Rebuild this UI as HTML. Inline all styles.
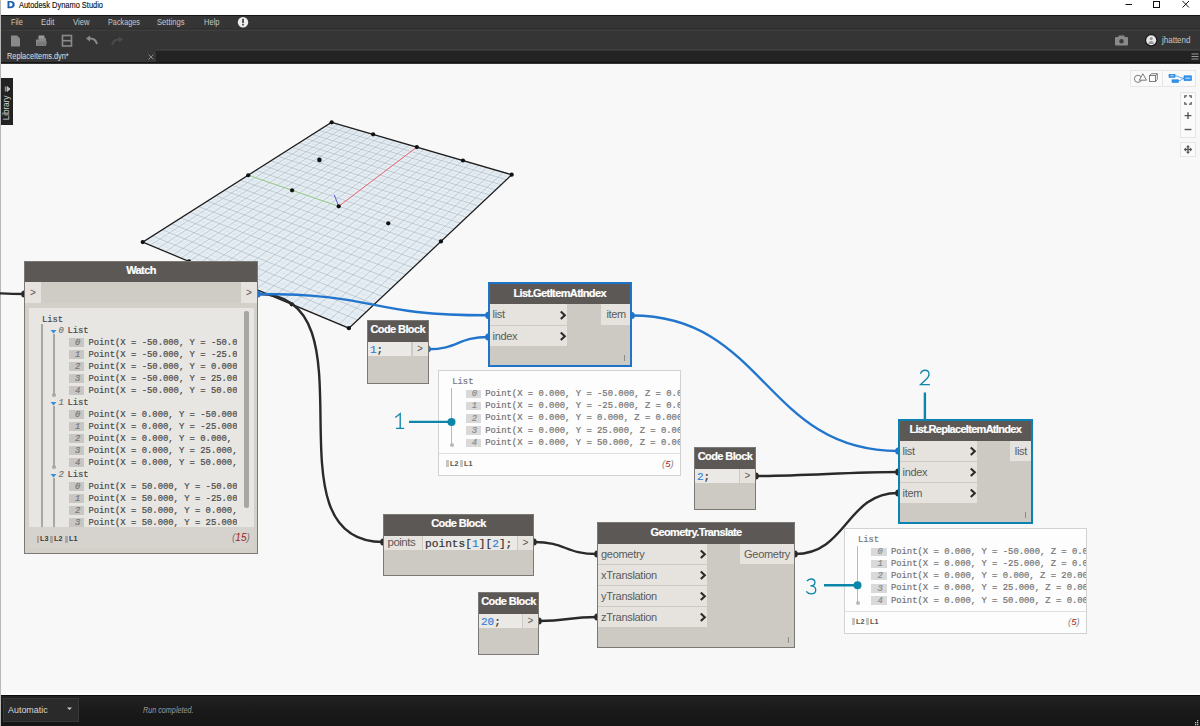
<!DOCTYPE html><html><head><meta charset='utf-8'><style>
*{box-sizing:border-box}
html,body{margin:0;padding:0;width:1200px;height:726px;overflow:hidden;background:#f8f8f8;font-family:"Liberation Sans", sans-serif}
.a{position:absolute}
.t{position:absolute;white-space:pre;line-height:1}
.node{position:absolute;background:#cdc9c3;border:1px solid #7c7874}
.hdr{position:absolute;left:0;right:0;top:0;background:#5b5855;color:#fff;font-weight:bold;font-size:11px;text-align:center;white-space:pre;-webkit-text-stroke:0.2px #fff}
.port{position:absolute;background:#e6e3de;color:#5a5a5a;font-size:11px;white-space:pre}
.mono{font-family:"Liberation Mono", monospace;-webkit-text-stroke:0.2px currentColor}
</style></head><body>
<div class='a' style='left:0;top:0;width:1200px;height:14px;background:#fff'></div>
<div class='a' style='left:0;top:0;width:1px;height:726px;background:#b8b8b8'></div>
<svg class='a' style='left:6px;top:0' width='10' height='10' viewBox='0 0 10 10'><path d='M1.5 1h3.2c2.6 0 4 1.4 4 3.6S7.3 8.2 4.7 8.2H1.5z' fill='#1b5fae'/><path d='M3.4 2.6h1.1c1.3 0 2 .8 2 2s-.7 2-2 2H3.4z' fill='#fff'/></svg>
<div class='t' style='left:18.5px;top:1px;font-size:9.2px;color:#111;-webkit-text-stroke:0.15px #111;transform:scaleX(0.81);transform-origin:0 0'>Autodesk Dynamo Studio</div>
<svg class='a' style='left:1120px;top:0' width='80' height='14'><path d='M5.5 4.5h6.5' stroke='#111' stroke-width='1'/><rect x='33.5' y='1.5' width='6' height='6' fill='none' stroke='#111' stroke-width='1'/><path d='M62.5 1l6.5 6.5M69 1l-6.5 6.5' stroke='#111' stroke-width='1'/></svg>
<div class='a' style='left:1px;top:14.5px;width:1199px;height:49px;background:#353535'></div>
<div class='a' style='left:1px;top:14.5px;width:1199px;height:1.2px;background:#151515'></div>
<div class='a' style='left:1px;top:28px;width:1199px;height:1px;background:#303030'></div>
<div class='a' style='left:1px;top:29.7px;width:1199px;height:1.2px;background:#3e3e3e'></div>
<div class='a' style='left:1px;top:62px;width:1199px;height:1.3px;background:#141414'></div>
<div class='a' style='left:156px;top:49.3px;width:1044px;height:1.2px;background:#3e3e3e'></div>
<div class='a' style='left:156px;top:50.5px;width:1044px;height:11.5px;background:#232323'></div>
<div class='t' style='left:10.5px;top:18px;font-size:9.2px;color:#c8c8c8;transform:scaleX(0.8);transform-origin:0 0'>File</div>
<div class='t' style='left:41px;top:18px;font-size:9.2px;color:#c8c8c8;transform:scaleX(0.84);transform-origin:0 0'>Edit</div>
<div class='t' style='left:73px;top:18px;font-size:9.2px;color:#c8c8c8;transform:scaleX(0.83);transform-origin:0 0'>View</div>
<div class='t' style='left:108px;top:18px;font-size:9.2px;color:#c8c8c8;transform:scaleX(0.79);transform-origin:0 0'>Packages</div>
<div class='t' style='left:157px;top:18px;font-size:9.2px;color:#c8c8c8;transform:scaleX(0.83);transform-origin:0 0'>Settings</div>
<div class='t' style='left:204px;top:18px;font-size:9.2px;color:#c8c8c8;transform:scaleX(0.82);transform-origin:0 0'>Help</div>
<svg class='a' style='left:237px;top:16px' width='13' height='13'><circle cx='6' cy='6.3' r='5.2' fill='#eee'/><rect x='5.2' y='2.8' width='1.6' height='4.4' fill='#333'/><rect x='5.2' y='8' width='1.6' height='1.5' fill='#333'/></svg>
<svg class='a' style='left:0;top:30px' width='130' height='20'>
<path d='M11 5.5h6l3 3v8h-9z' fill='#8a8a8a'/>
<path d='M38.5 5.5h6v4h-6z' fill='#9a9a9a'/><path d='M36 9.5h3.5l1-1.2h5.5v7.7h-10z' fill='#8a8a8a'/><path d='M36 16l1.5-4.5h9.5l-1 4.5z' fill='#7a7a7a'/>
<rect x='62.5' y='5.5' width='9' height='10.5' fill='none' stroke='#8a8a8a' stroke-width='1.6'/><path d='M62.5 10.7h9' stroke='#8a8a8a' stroke-width='1.6'/>
<path d='M97 14c-1-4-4-6-8-5.5' fill='none' stroke='#8a8a8a' stroke-width='2'/><path d='M86 8.5l4-3v6z' fill='#8a8a8a'/>
<path d='M112 15c1-4 4-6 8-5.5' fill='none' stroke='#4a4a4a' stroke-width='2'/><path d='M123 9.5l-4-3v6z' fill='#4a4a4a'/>
</svg>
<svg class='a' style='left:1110px;top:30px' width='90' height='20'>
<rect x='5' y='7' width='13' height='8.5' rx='1' fill='#8a8a8a'/><rect x='8.5' y='5.5' width='6' height='2.5' fill='#8a8a8a'/><circle cx='11.5' cy='11.2' r='2.2' fill='#3a3a3a'/>
<circle cx='41.2' cy='10.3' r='6.2' fill='#1a1a1a'/><circle cx='41.2' cy='10.3' r='5' fill='#e8e8e8'/><circle cx='41.2' cy='8.6' r='1.6' fill='#9a9a9a'/><path d='M38.4 14c.3-2 1.3-3 2.8-3s2.5 1 2.8 3z' fill='#9a9a9a'/>
</svg>
<div class='t' style='left:1161.5px;top:36px;font-size:9.2px;color:#c8c8c8;transform:scaleX(0.87);transform-origin:0 0'>jhattend</div>
<div class='t' style='left:6.5px;top:51.5px;font-size:9.2px;color:#e0e0e0;transform:scaleX(0.8);transform-origin:0 0'>ReplaceItems.dyn*</div>
<svg class='a' style='left:146px;top:52px' width='10' height='10'><path d='M2.5 2.5l5 5M7.5 2.5l-5 5' stroke='#8a8a8a' stroke-width='1'/></svg>
<svg class='a' style='left:1190px;top:52px' width='10' height='10'><path d='M1.5 2h7M1.5 4.5h7M1.5 7h7' stroke='#9a9a9a' stroke-width='1'/></svg>
<div class='a' style='left:1px;top:78px;width:12px;height:47px;background:#232323'></div>
<svg class='a' style='left:1px;top:78px' width='12' height='47'><path d='M4.3 8.5v5M6 8.5l3 2.5-3 2.5z' fill='#c0c0c0' stroke='#c0c0c0' stroke-width='0.9'/></svg>
<div class='t' style='left:-9.5px;top:103px;width:30px;height:10px;line-height:10px;font-size:8.5px;color:#d0d0d0;transform:rotate(-90deg);transform-origin:15px 5px;text-align:center;letter-spacing:-0.2px'>Library</div>
<div class='a' style='left:1px;top:689.5px;width:1199px;height:5px;background:linear-gradient(#f8f8f8,#fdfdfd)'></div>
<div class='a' style='left:1px;top:694.5px;width:1199px;height:31.5px;background:linear-gradient(#222 0%,#1a1a1a 50%,#151515 100%)'></div>
<div class='a' style='left:1px;top:694.5px;width:1199px;height:1.2px;background:#0c0c0c'></div>
<div class='a' style='left:3px;top:698px;width:76px;height:24px;background:#2a2a2a;border:1px solid #383838'></div>
<div class='t' style='left:8px;top:705px;font-size:9.5px;color:#d8d8d8;transform:scaleX(0.94);transform-origin:0 0'>Automatic</div>
<svg class='a' style='left:66px;top:706px' width='8' height='6'><path d='M1 1.5h5l-2.5 2.5z' fill='#ccc'/></svg>
<svg class='a' style='left:1190px;top:715px' width='10' height='11'><g fill='#bbb'><rect x='7' y='7' width='1.3' height='1.3'/><rect x='5' y='9' width='1.3' height='1.3'/><rect x='7' y='9' width='1.3' height='1.3'/><rect x='3' y='11' width='1.3' height='1.3'/><rect x='7' y='5' width='1.3' height='1.3'/><rect x='5' y='7' width='1.3' height='1.3'/></g></svg>
<div class='t' style='left:143px;top:705.5px;font-size:8.8px;font-style:italic;color:#9a9a9a;transform:scaleX(0.82);transform-origin:0 0'>Run completed.</div>
<div class='a' style='left:1129.5px;top:70px;width:66px;height:17px;background:#fafafa;border:1px solid #e6e6e6'></div>
<div class='a' style='left:1162px;top:71px;width:1px;height:15px;background:#e6e6e6'></div>
<svg class='a' style='left:1129px;top:70px' width='67' height='17'>
<circle cx='9' cy='8.8' r='3.6' fill='none' stroke='#707070' stroke-width='0.9'/><path d='M10.3 10.2l3.6-6.4 3.6 6.4z' fill='#fafafa' stroke='#707070' stroke-width='0.9'/>
<rect x='20.5' y='5.5' width='6' height='6' fill='none' stroke='#707070' stroke-width='0.9'/><path d='M20.5 5.5l1.8-1.8h6v6l-1.8 1.8M26.5 5.5l1.8-1.8' fill='none' stroke='#707070' stroke-width='0.9'/>
<rect x='40' y='4.3' width='6' height='3' fill='#3194ee' stroke='#1f7fd8' stroke-width='0.6'/><rect x='43' y='9.8' width='6.5' height='2.7' fill='#3194ee' stroke='#1f7fd8' stroke-width='0.6'/><rect x='55' y='5.8' width='7.5' height='4.8' fill='#3194ee' stroke='#1f7fd8' stroke-width='0.6'/>
<path d='M46 5.8c4 0 4.5 2.5 9 2.5M49.5 11c2.5 0 3-2.5 5.5-2.5' fill='none' stroke='#3194ee' stroke-width='0.8'/>
<rect x='56.3' y='7.7' width='5' height='1' fill='#cfe6fb'/><rect x='41.5' y='5.3' width='3' height='0.9' fill='#cfe6fb'/>
</svg>
<div class='a' style='left:1180px;top:91.5px;width:16px;height:46px;background:#fafafa;border:1px solid #e6e6e6'></div>
<div class='a' style='left:1180px;top:142px;width:16px;height:15px;background:#fafafa;border:1px solid #e6e6e6'></div>
<svg class='a' style='left:1180px;top:91px' width='16' height='67'>
<path d='M4.8 7v-2.2h2.2M9 4.8h2.2v2.2M11.2 11v2.2h-2.2M7 13.2h-2.2v-2.2' fill='none' stroke='#555' stroke-width='1.2'/>
<path d='M8 21.2v6.8M4.6 24.6h6.8' stroke='#555' stroke-width='1.4'/>
<path d='M4.6 38.5h6.8' stroke='#555' stroke-width='1.4'/>
<path d='M8 55v7M4.5 58.5h7' stroke='#555' stroke-width='1.3'/><path d='M8 54l-2 2.2h4zM8 63l-2-2.2h4zM3.8 58.5l2.2-2v4zM12.2 58.5l-2.2-2v4z' fill='#555'/>
</svg>
<svg class='a' style='left:0;top:0' width='1200' height='726'>
<path d='M331.7 122.3L511.7 174.7L348.9 328.2L142.7 242.1Z' fill='#e6eef4'/>
<path d='M338.46 124.27L150.22 245.24M325.41 126.29L506.44 179.66M345.27 126.25L157.82 248.41M319.01 130.34L501.08 184.72M352.15 128.25L165.5 251.62M312.49 134.47L495.61 189.88M359.09 130.27L173.27 254.86M305.86 138.68L490.02 195.14M366.08 132.31L181.12 258.14M299.11 142.96L484.33 200.51M373.14 134.36L189.06 261.46M292.23 147.32L478.52 205.99M380.26 136.44L197.1 264.81M285.23 151.76L472.59 211.58M387.44 138.53L205.22 268.2M278.1 156.28L466.53 217.29M394.69 140.64L213.43 271.63M270.83 160.88L460.35 223.12M402.0 142.77L221.74 275.1M263.42 165.58L454.03 229.07M409.38 144.91L230.14 278.61M255.87 170.36L447.58 235.16M416.83 147.08L238.65 282.16M248.18 175.24L440.98 241.38M424.34 149.27L247.25 285.75M240.34 180.21L434.24 247.73M431.92 151.47L255.95 289.39M232.34 185.28L427.35 254.23M439.57 153.7L264.75 293.06M224.18 190.45L420.31 260.87M447.29 155.95L273.66 296.78M215.85 195.73L413.1 267.67M455.08 158.22L282.67 300.55M207.36 201.11L405.72 274.62M462.94 160.51L291.79 304.35M198.69 206.61L398.18 281.74M470.88 162.82L301.02 308.21M189.85 212.22L390.45 289.02M478.89 165.15L310.37 312.11M180.81 217.94L382.54 296.48M486.98 167.5L319.82 316.06M171.59 223.79L374.43 304.12M495.14 169.88L329.4 320.06M162.16 229.76L366.13 311.95M503.38 172.28L339.09 324.1M152.54 235.86L357.62 319.98' stroke='#98a6b2' stroke-width='0.6' stroke-opacity='0.8' fill='none'/>
<path d='M335.07 123.28L146.45 243.67M328.57 124.28L509.08 177.17M341.86 125.26L154.01 246.82M322.22 128.31L503.77 182.18M348.71 127.25L161.65 250.01M315.77 132.4L498.35 187.28M355.61 129.26L169.37 253.24M309.19 136.57L492.83 192.49M362.58 131.29L177.18 256.5M302.5 140.81L487.19 197.81M369.6 133.33L185.08 259.8M295.69 145.13L481.44 203.23M376.69 135.4L193.07 263.13M288.75 149.53L475.57 208.77M383.84 137.48L201.14 266.5M281.68 154.01L469.58 214.42M391.06 139.58L209.31 269.91M274.48 158.57L463.46 220.19M398.34 141.7L217.57 273.36M267.14 163.22L457.21 226.08M405.68 143.84L225.93 276.85M259.67 167.96L450.82 232.1M413.09 145.99L234.38 280.38M252.05 172.79L444.3 238.25M420.57 148.17L242.93 283.95M244.28 177.71L437.63 244.54M428.12 150.37L251.58 287.56M236.36 182.74L430.82 250.96M435.73 152.59L260.33 291.22M228.28 187.86L423.85 257.53M443.42 154.82L269.19 294.92M220.04 193.08L416.72 264.25M451.17 157.08L278.15 298.66M211.63 198.41L409.43 271.13M459.0 159.36L287.22 302.44M203.05 203.85L401.97 278.16M466.9 161.66L296.39 306.28M194.29 209.4L394.34 285.36M474.88 163.98L305.68 310.15M185.35 215.06L386.52 292.73M482.92 166.32L315.08 314.08M176.22 220.85L378.51 300.28M491.05 168.69L324.59 318.05M166.9 226.76L370.31 308.01M499.25 171.08L334.23 322.07M157.38 232.8L361.9 315.94M507.53 173.49L343.98 326.15M147.65 238.97L353.29 324.06' stroke='#b4c0ca' stroke-width='0.4' stroke-opacity='0.45' fill='none'/>
<path d='M331.7 122.3L511.7 174.7L348.9 328.2L142.7 242.1Z' fill='none' stroke='#1e1e1e' stroke-width='1.3'/>
<path d='M338.72 206.3L416.8 147.1' stroke='#f06a78' stroke-width='1'/>
<path d='M338.72 206.3L248.2 175.2' stroke='#9ccf8c' stroke-width='1'/>
<path d='M338.72 206.3L334.2 194.8' stroke='#5a5ad8' stroke-width='1'/>
<circle cx='331.7' cy='122.3' r='2.1' fill='#111'/>
<circle cx='511.7' cy='174.7' r='2.1' fill='#111'/>
<circle cx='348.9' cy='328.2' r='2.1' fill='#111'/>
<circle cx='142.7' cy='242.1' r='2.1' fill='#111'/>
<circle cx='373.14' cy='134.36' r='2.1' fill='#111'/>
<circle cx='416.83' cy='147.08' r='2.1' fill='#111'/>
<circle cx='462.94' cy='160.51' r='2.1' fill='#111'/>
<circle cx='189.06' cy='261.46' r='2.1' fill='#111'/>
<circle cx='238.65' cy='282.16' r='2.1' fill='#111'/>
<circle cx='291.79' cy='304.35' r='2.1' fill='#111'/>
<circle cx='248.18' cy='175.24' r='2.1' fill='#111'/>
<circle cx='292.11' cy='190.31' r='2.1' fill='#111'/>
<circle cx='338.72' cy='206.3' r='2.1' fill='#111'/>
<circle cx='388.25' cy='223.29' r='2.1' fill='#111'/>
<circle cx='440.98' cy='241.38' r='2.1' fill='#111'/>
<circle cx='319.4' cy='159.9' r='2.3' fill='#111'/>
<path d='M-40 292.5C0 292.5 0 294 24 294' fill='none' stroke='#2a2a2a' stroke-width='2.4'/>
<path d='M258 294C380 294 261 542 383 542' fill='none' stroke='#2a2a2a' stroke-width='2.4'/>
<path d='M258 294C383 294 363 315.3 488 315.3' fill='none' stroke='#2275cd' stroke-width='2.4'/>
<path d='M428 349.3C458 349.3 458 337 488 337' fill='none' stroke='#2275cd' stroke-width='2.4'/>
<path d='M632 315.5C765 315.5 765 451 898 451' fill='none' stroke='#2275cd' stroke-width='2.4'/>
<path d='M756 476C806 476 848 472 898 472' fill='none' stroke='#2a2a2a' stroke-width='2.4'/>
<path d='M795 554C847 554 846 493 898 493' fill='none' stroke='#2a2a2a' stroke-width='2.4'/>
<path d='M534 542C566 542 565 554 597 554' fill='none' stroke='#2a2a2a' stroke-width='2.4'/>
<path d='M539 621C569 621 567 617 597 617' fill='none' stroke='#2a2a2a' stroke-width='2.4'/>
<ellipse cx='24' cy='294' rx='2.8' ry='3.6' fill='#2a2a2a'/>
<ellipse cx='258' cy='294' rx='2.8' ry='3.6' fill='#2275cd'/>
<ellipse cx='383' cy='542' rx='2.8' ry='3.6' fill='#2a2a2a'/>
<ellipse cx='488' cy='315.3' rx='2.8' ry='3.6' fill='#2275cd'/>
<ellipse cx='428' cy='349' rx='2.8' ry='3.6' fill='#2275cd'/>
<ellipse cx='488' cy='337' rx='2.8' ry='3.6' fill='#2275cd'/>
<ellipse cx='632' cy='315.5' rx='2.8' ry='3.6' fill='#2275cd'/>
<ellipse cx='898' cy='451' rx='2.8' ry='3.6' fill='#2275cd'/>
<ellipse cx='756' cy='476' rx='2.8' ry='3.6' fill='#2a2a2a'/>
<ellipse cx='898' cy='472' rx='2.8' ry='3.6' fill='#2a2a2a'/>
<ellipse cx='795' cy='554' rx='2.8' ry='3.6' fill='#2a2a2a'/>
<ellipse cx='898' cy='493' rx='2.8' ry='3.6' fill='#2a2a2a'/>
<ellipse cx='534' cy='542' rx='2.8' ry='3.6' fill='#2a2a2a'/>
<ellipse cx='597' cy='554' rx='2.8' ry='3.6' fill='#2a2a2a'/>
<ellipse cx='539' cy='621' rx='2.8' ry='3.6' fill='#2a2a2a'/>
<ellipse cx='597' cy='617' rx='2.8' ry='3.6' fill='#2a2a2a'/>
</svg>
<div class='node' style='left:487.5px;top:282px;width:144.5px;height:85px;border:2px solid #1f74c8'>
<div class='hdr' style='height:20px;line-height:18px;letter-spacing:-0.6px;text-indent:0px'>List.GetItemAtIndex</div>
<div class='port' style='left:0;top:20.0px;width:77.5px;height:20.5px;line-height:20.5px;padding-left:3px;letter-spacing:-0.3px'>list<svg class='a' style='right:0px;top:5.95px' width='8' height='10'><path d='M1.8 1.5l4 3.8-4 3.8' fill='none' stroke='#2a2a2a' stroke-width='2.1'/></svg></div>
<div class='port' style='left:0;top:41.5px;width:77.5px;height:20.5px;line-height:20.5px;padding-left:3px;letter-spacing:-0.3px'>index<svg class='a' style='right:0px;top:5.95px' width='8' height='10'><path d='M1.8 1.5l4 3.8-4 3.8' fill='none' stroke='#2a2a2a' stroke-width='2.1'/></svg></div>
<div class='port' style='right:0;top:20.0px;width:29px;height:20.5px;line-height:20.5px;text-align:right;padding-right:4px;letter-spacing:-0.3px'>item</div>
<div class='a' style='right:5px;bottom:4px;width:1px;height:6px;background:#8a8a8a'></div>
</div>
<div class='node' style='left:897.5px;top:419px;width:135.5px;height:105px;border:2px solid #0c82b2'>
<div class='hdr' style='height:19.5px;line-height:17.5px;letter-spacing:-0.7px;text-indent:0px'>List.ReplaceItemAtIndex</div>
<div class='port' style='left:0;top:19.5px;width:77.5px;height:20.5px;line-height:20.5px;padding-left:3px;letter-spacing:-0.3px'>list<svg class='a' style='right:0px;top:5.95px' width='8' height='10'><path d='M1.8 1.5l4 3.8-4 3.8' fill='none' stroke='#2a2a2a' stroke-width='2.1'/></svg></div>
<div class='port' style='left:0;top:40.5px;width:77.5px;height:20.5px;line-height:20.5px;padding-left:3px;letter-spacing:-0.3px'>index<svg class='a' style='right:0px;top:5.95px' width='8' height='10'><path d='M1.8 1.5l4 3.8-4 3.8' fill='none' stroke='#2a2a2a' stroke-width='2.1'/></svg></div>
<div class='port' style='left:0;top:61.5px;width:77.5px;height:20.5px;line-height:20.5px;padding-left:3px;letter-spacing:-0.3px'>item<svg class='a' style='right:0px;top:5.95px' width='8' height='10'><path d='M1.8 1.5l4 3.8-4 3.8' fill='none' stroke='#2a2a2a' stroke-width='2.1'/></svg></div>
<div class='port' style='right:0;top:19.5px;width:21px;height:20.5px;line-height:20.5px;text-align:right;padding-right:4px;letter-spacing:-0.3px'>list</div>
<div class='a' style='right:5px;bottom:4px;width:1px;height:6px;background:#8a8a8a'></div>
</div>
<div class='node' style='left:597px;top:522px;width:198px;height:126px;border:1px solid #7c7874'>
<div class='hdr' style='height:20.5px;line-height:18.5px;letter-spacing:-0.6px;text-indent:0px'>Geometry.Translate</div>
<div class='port' style='left:0;top:20.5px;width:108.5px;height:20.5px;line-height:20.5px;padding-left:3px;letter-spacing:-0.3px'>geometry<svg class='a' style='right:0px;top:5.95px' width='8' height='10'><path d='M1.8 1.5l4 3.8-4 3.8' fill='none' stroke='#2a2a2a' stroke-width='2.1'/></svg></div>
<div class='port' style='left:0;top:41.5px;width:108.5px;height:20.5px;line-height:20.5px;padding-left:3px;letter-spacing:-0.3px'>xTranslation<svg class='a' style='right:0px;top:5.95px' width='8' height='10'><path d='M1.8 1.5l4 3.8-4 3.8' fill='none' stroke='#2a2a2a' stroke-width='2.1'/></svg></div>
<div class='port' style='left:0;top:62.5px;width:108.5px;height:20.5px;line-height:20.5px;padding-left:3px;letter-spacing:-0.3px'>yTranslation<svg class='a' style='right:0px;top:5.95px' width='8' height='10'><path d='M1.8 1.5l4 3.8-4 3.8' fill='none' stroke='#2a2a2a' stroke-width='2.1'/></svg></div>
<div class='port' style='left:0;top:83.5px;width:108.5px;height:20.5px;line-height:20.5px;padding-left:3px;letter-spacing:-0.3px'>zTranslation<svg class='a' style='right:0px;top:5.95px' width='8' height='10'><path d='M1.8 1.5l4 3.8-4 3.8' fill='none' stroke='#2a2a2a' stroke-width='2.1'/></svg></div>
<div class='port' style='right:0;top:20.5px;width:54.5px;height:20.5px;line-height:20.5px;text-align:right;padding-right:4px;letter-spacing:-0.3px'>Geometry</div>
<div class='a' style='right:5px;bottom:4px;width:1px;height:6px;background:#8a8a8a'></div>
</div>
<div class='node' style='left:367px;top:320px;width:61.5px;height:63.5px'>
<div class='hdr' style='height:20.5px;line-height:16.8px;letter-spacing:-0.6px'>Code Block</div>
<div class='port mono' style='left:0px;top:20.5px;width:43px;height:14.5px;line-height:16px;padding-left:2px;color:#333;font-size:11px;background:#ebe9e6'><span style='color:#2b7fd8'>1</span>;</div>
<div class='port' style='right:0;top:20.5px;width:15px;height:14.5px;line-height:14px;text-align:center;font-size:10px;color:#555'>&gt;</div>
</div>
<div class='node' style='left:694px;top:447px;width:62px;height:63px'>
<div class='hdr' style='height:20.5px;line-height:16.8px;letter-spacing:-0.6px'>Code Block</div>
<div class='port mono' style='left:0px;top:20.5px;width:44px;height:14.5px;line-height:16px;padding-left:2px;color:#333;font-size:11px;background:#ebe9e6'><span style='color:#2b7fd8'>2</span>;</div>
<div class='port' style='right:0;top:20.5px;width:15px;height:14.5px;line-height:14px;text-align:center;font-size:10px;color:#555'>&gt;</div>
</div>
<div class='node' style='left:478px;top:592px;width:61px;height:62.5px'>
<div class='hdr' style='height:20.5px;line-height:16.8px;letter-spacing:-0.6px'>Code Block</div>
<div class='port mono' style='left:0px;top:20.5px;width:43px;height:14.5px;line-height:16px;padding-left:2px;color:#333;font-size:11px;background:#ebe9e6'><span style='color:#2b7fd8'>20</span>;</div>
<div class='port' style='right:0;top:20.5px;width:15px;height:14.5px;line-height:14px;text-align:center;font-size:10px;color:#555'>&gt;</div>
</div>
<div class='node' style='left:383px;top:514px;width:151px;height:62px'>
<div class='hdr' style='height:20.5px;line-height:16.8px;letter-spacing:-0.6px'>Code Block</div>
<div class='port' style='left:0;top:20.5px;width:38px;height:14.5px;line-height:12px;padding-left:3.5px;font-size:11.5px;letter-spacing:-0.5px'>points</div>
<div class='port mono' style='left:39px;top:20.5px;width:94px;height:14.5px;line-height:16px;padding-left:2px;color:#333;font-size:11.2px;background:#ebe9e6'>points[<span style='color:#2b7fd8'>1</span>][<span style='color:#2b7fd8'>2</span>];</div>
<div class='port' style='right:0;top:20.5px;width:15px;height:14.5px;line-height:14px;text-align:center;font-size:10px;color:#555'>&gt;</div>
</div>
<div class='node' style='left:24px;top:261px;width:234px;height:293px;background:#d3d0ca'>
<div class='hdr' style='height:20px;line-height:17.5px;letter-spacing:-0.6px'>Watch</div>
<div class='a' style='left:0;top:20px;width:232px;height:21px;background:#cfcbc5'></div>
<div class='port' style='left:0;top:20px;width:16px;height:21px;line-height:21px;text-align:center;font-size:10px;color:#555'>&gt;</div>
<div class='port' style='right:0;top:20px;width:16px;height:21px;line-height:21px;text-align:center;font-size:10px;color:#555'>&gt;</div>
<div class='a' style='left:3.5px;top:46px;width:225px;height:219px;background:#e8e6e2'></div>
<div class='a' style='left:3.5px;top:46px;width:208.7px;height:219px;overflow:hidden'>
<div class='t mono' style='left:13.399999999999999px;top:8.3px;font-size:8.9px;color:#4a4a4a'>List</div>
<div class='a' style='left:12.899999999999999px;top:16px;width:1.5px;height:210px;background:#a9a7a3'></div>
<svg class='a' style='left:21.4px;top:21px' width='8' height='6'><path d='M0.5 1h6l-3 3.5z' fill='#3a8fdc'/></svg>
<div class='t mono' style='left:29.9px;top:19.30000000000001px;font-size:8.9px;font-style:italic;color:#777'>0</div>
<div class='t mono' style='left:38.9px;top:19.3px;font-size:8.9px;color:#4a4a4a'>List</div>
<div class='a' style='left:24.9px;top:26px;width:1.5px;height:59.5px;background:#a9a7a3'></div>
<div class='a' style='left:23.699999999999996px;top:84.5px;width:4px;height:4px;border-radius:2px;background:#a9a7a3'></div>
<div class='a' style='left:40.4px;top:30.0px;width:15.5px;height:9px;background:#c8c6c2'></div><div class='t mono' style='left:46.4px;top:31.3px;font-size:8.9px;font-style:italic;color:#777'>0</div>
<div class='t mono' style='left:59.9px;top:30.8px;font-size:8.9px;color:#4a4a4a'>Point(X = -50.000, Y = -50.000, Z = 0.000)</div>
<div class='a' style='left:40.4px;top:42.0px;width:15.5px;height:9px;background:#c8c6c2'></div><div class='t mono' style='left:46.4px;top:43.3px;font-size:8.9px;font-style:italic;color:#777'>1</div>
<div class='t mono' style='left:59.9px;top:42.8px;font-size:8.9px;color:#4a4a4a'>Point(X = -50.000, Y = -25.000, Z = 0.000)</div>
<div class='a' style='left:40.4px;top:54.0px;width:15.5px;height:9px;background:#c8c6c2'></div><div class='t mono' style='left:46.4px;top:55.3px;font-size:8.9px;font-style:italic;color:#777'>2</div>
<div class='t mono' style='left:59.9px;top:54.8px;font-size:8.9px;color:#4a4a4a'>Point(X = -50.000, Y = 0.000, Z = 0.000)</div>
<div class='a' style='left:40.4px;top:66.0px;width:15.5px;height:9px;background:#c8c6c2'></div><div class='t mono' style='left:46.4px;top:67.3px;font-size:8.9px;font-style:italic;color:#777'>3</div>
<div class='t mono' style='left:59.9px;top:66.8px;font-size:8.9px;color:#4a4a4a'>Point(X = -50.000, Y = 25.000, Z = 0.000)</div>
<div class='a' style='left:40.4px;top:78.0px;width:15.5px;height:9px;background:#c8c6c2'></div><div class='t mono' style='left:46.4px;top:79.3px;font-size:8.9px;font-style:italic;color:#777'>4</div>
<div class='t mono' style='left:59.9px;top:78.8px;font-size:8.9px;color:#4a4a4a'>Point(X = -50.000, Y = 50.000, Z = 0.000)</div>
<svg class='a' style='left:21.4px;top:93px' width='8' height='6'><path d='M0.5 1h6l-3 3.5z' fill='#3a8fdc'/></svg>
<div class='t mono' style='left:29.9px;top:91.30000000000001px;font-size:8.9px;font-style:italic;color:#777'>1</div>
<div class='t mono' style='left:38.9px;top:91.3px;font-size:8.9px;color:#4a4a4a'>List</div>
<div class='a' style='left:24.9px;top:98px;width:1.5px;height:59.5px;background:#a9a7a3'></div>
<div class='a' style='left:23.699999999999996px;top:156.5px;width:4px;height:4px;border-radius:2px;background:#a9a7a3'></div>
<div class='a' style='left:40.4px;top:102.0px;width:15.5px;height:9px;background:#c8c6c2'></div><div class='t mono' style='left:46.4px;top:103.3px;font-size:8.9px;font-style:italic;color:#777'>0</div>
<div class='t mono' style='left:59.9px;top:102.8px;font-size:8.9px;color:#4a4a4a'>Point(X = 0.000, Y = -50.000, Z = 0.000)</div>
<div class='a' style='left:40.4px;top:114.0px;width:15.5px;height:9px;background:#c8c6c2'></div><div class='t mono' style='left:46.4px;top:115.3px;font-size:8.9px;font-style:italic;color:#777'>1</div>
<div class='t mono' style='left:59.9px;top:114.8px;font-size:8.9px;color:#4a4a4a'>Point(X = 0.000, Y = -25.000, Z = 0.000)</div>
<div class='a' style='left:40.4px;top:126.0px;width:15.5px;height:9px;background:#c8c6c2'></div><div class='t mono' style='left:46.4px;top:127.3px;font-size:8.9px;font-style:italic;color:#777'>2</div>
<div class='t mono' style='left:59.9px;top:126.8px;font-size:8.9px;color:#4a4a4a'>Point(X = 0.000, Y = 0.000, Z = 0.000)</div>
<div class='a' style='left:40.4px;top:138.0px;width:15.5px;height:9px;background:#c8c6c2'></div><div class='t mono' style='left:46.4px;top:139.3px;font-size:8.9px;font-style:italic;color:#777'>3</div>
<div class='t mono' style='left:59.9px;top:138.8px;font-size:8.9px;color:#4a4a4a'>Point(X = 0.000, Y = 25.000, Z = 0.000)</div>
<div class='a' style='left:40.4px;top:150.0px;width:15.5px;height:9px;background:#c8c6c2'></div><div class='t mono' style='left:46.4px;top:151.3px;font-size:8.9px;font-style:italic;color:#777'>4</div>
<div class='t mono' style='left:59.9px;top:150.8px;font-size:8.9px;color:#4a4a4a'>Point(X = 0.000, Y = 50.000, Z = 0.000)</div>
<svg class='a' style='left:21.4px;top:165px' width='8' height='6'><path d='M0.5 1h6l-3 3.5z' fill='#3a8fdc'/></svg>
<div class='t mono' style='left:29.9px;top:163.3px;font-size:8.9px;font-style:italic;color:#777'>2</div>
<div class='t mono' style='left:38.9px;top:163.3px;font-size:8.9px;color:#4a4a4a'>List</div>
<div class='a' style='left:24.9px;top:170px;width:1.5px;height:200px;background:#a9a7a3'></div>
<div class='a' style='left:40.4px;top:174.0px;width:15.5px;height:9px;background:#c8c6c2'></div><div class='t mono' style='left:46.4px;top:175.3px;font-size:8.9px;font-style:italic;color:#777'>0</div>
<div class='t mono' style='left:59.9px;top:174.8px;font-size:8.9px;color:#4a4a4a'>Point(X = 50.000, Y = -50.000, Z = 0.000)</div>
<div class='a' style='left:40.4px;top:186.0px;width:15.5px;height:9px;background:#c8c6c2'></div><div class='t mono' style='left:46.4px;top:187.3px;font-size:8.9px;font-style:italic;color:#777'>1</div>
<div class='t mono' style='left:59.9px;top:186.8px;font-size:8.9px;color:#4a4a4a'>Point(X = 50.000, Y = -25.000, Z = 0.000)</div>
<div class='a' style='left:40.4px;top:198.0px;width:15.5px;height:9px;background:#c8c6c2'></div><div class='t mono' style='left:46.4px;top:199.3px;font-size:8.9px;font-style:italic;color:#777'>2</div>
<div class='t mono' style='left:59.9px;top:198.8px;font-size:8.9px;color:#4a4a4a'>Point(X = 50.000, Y = 0.000, Z = 0.000)</div>
<div class='a' style='left:40.4px;top:210.0px;width:15.5px;height:9px;background:#c8c6c2'></div><div class='t mono' style='left:46.4px;top:211.3px;font-size:8.9px;font-style:italic;color:#777'>3</div>
<div class='t mono' style='left:59.9px;top:210.8px;font-size:8.9px;color:#4a4a4a'>Point(X = 50.000, Y = 25.000, Z = 0.000)</div>
<div class='a' style='left:40.4px;top:222.0px;width:15.5px;height:9px;background:#c8c6c2'></div><div class='t mono' style='left:46.4px;top:223.3px;font-size:8.9px;font-style:italic;color:#777'>4</div>
<div class='t mono' style='left:59.9px;top:222.8px;font-size:8.9px;color:#4a4a4a'>Point(X = 50.000, Y = 50.000, Z = 0.000)</div>
</div>
<div class='a' style='left:219px;top:49px;width:4.5px;height:197px;border-radius:2px;background:#a8a6a2'></div>
<div class='a' style='left:3.5px;top:265px;width:225px;height:21px;background:#d6d3ce'></div>
<div class='a' style='left:11.5px;top:273.5px;width:2.6px;height:7px;background:#aaa7a2'></div>
<div class='t' style='left:14.8px;top:273px;font-size:8px;font-weight:bold;color:#3a3a3a;transform:scaleX(0.9);transform-origin:0 0'>L3</div>
<div class='a' style='left:25.3px;top:273.5px;width:2.6px;height:7px;background:#aaa7a2'></div>
<div class='t' style='left:29.1px;top:273px;font-size:8px;font-weight:bold;color:#3a3a3a;transform:scaleX(0.9);transform-origin:0 0'>L2</div>
<div class='a' style='left:40.2px;top:273.5px;width:2.6px;height:7px;background:#aaa7a2'></div>
<div class='t' style='left:44px;top:273px;font-size:8px;font-weight:bold;color:#3a3a3a;transform:scaleX(0.9);transform-origin:0 0'>L1</div>
<div class='t' style='left:207px;top:271px;font-size:10px;font-style:italic;color:#777'>(<span style='color:#a02020'>15</span>)</div>
</div>
<div class='a' style='left:438px;top:370px;width:242.5px;height:105.5px;background:#fdfdfd;border:1px solid #d2d2d2;overflow:hidden'>
<div class='t mono' style='left:13.199999999999989px;top:7px;font-size:8.9px;color:#7a7a7a'>List</div>
<div class='a' style='left:12.399999999999988px;top:16.5px;width:1px;height:58.0px;background:#b9b9b9'></div>
<div class='a' style='left:10.899999999999988px;top:72.0px;width:4px;height:4px;border-radius:2px;background:#b9b9b9'></div>
<div class='a' style='left:26.69999999999999px;top:18.69999999999999px;width:15.5px;height:8.5px;background:#d9d9d9'></div>
<div class='t mono' style='left:32.69999999999999px;top:19.19999999999999px;font-size:8.9px;font-style:italic;color:#8a8a8a'>0</div>
<div class='t mono' style='left:46.19999999999999px;top:18.99999999999999px;font-size:8.9px;color:#757575'>Point(X = 0.000, Y = -50.000, Z = 0.000)</div>
<div class='a' style='left:26.69999999999999px;top:30.89999999999999px;width:15.5px;height:8.5px;background:#d9d9d9'></div>
<div class='t mono' style='left:32.69999999999999px;top:31.39999999999999px;font-size:8.9px;font-style:italic;color:#8a8a8a'>1</div>
<div class='t mono' style='left:46.19999999999999px;top:31.199999999999992px;font-size:8.9px;color:#757575'>Point(X = 0.000, Y = -25.000, Z = 0.000)</div>
<div class='a' style='left:26.69999999999999px;top:43.09999999999999px;width:15.5px;height:8.5px;background:#d9d9d9'></div>
<div class='t mono' style='left:32.69999999999999px;top:43.59999999999999px;font-size:8.9px;font-style:italic;color:#8a8a8a'>2</div>
<div class='t mono' style='left:46.19999999999999px;top:43.399999999999984px;font-size:8.9px;color:#757575'>Point(X = 0.000, Y = 0.000, Z = 0.000)</div>
<div class='a' style='left:26.69999999999999px;top:55.29999999999998px;width:15.5px;height:8.5px;background:#d9d9d9'></div>
<div class='t mono' style='left:32.69999999999999px;top:55.79999999999998px;font-size:8.9px;font-style:italic;color:#8a8a8a'>3</div>
<div class='t mono' style='left:46.19999999999999px;top:55.59999999999998px;font-size:8.9px;color:#757575'>Point(X = 0.000, Y = 25.000, Z = 0.000)</div>
<div class='a' style='left:26.69999999999999px;top:67.49999999999999px;width:15.5px;height:8.5px;background:#d9d9d9'></div>
<div class='t mono' style='left:32.69999999999999px;top:67.99999999999999px;font-size:8.9px;font-style:italic;color:#8a8a8a'>4</div>
<div class='t mono' style='left:46.19999999999999px;top:67.79999999999998px;font-size:8.9px;color:#757575'>Point(X = 0.000, Y = 50.000, Z = 0.000)</div>
<div class='a' style='left:0;top:82px;width:242.5px;height:1px;background:#dedede'></div>
<div class='a' style='left:7px;top:89px;width:2.6px;height:7px;background:#c5c5c5'></div>
<div class='t' style='left:10.5px;top:88.5px;font-size:8px;font-weight:bold;color:#555;transform:scaleX(0.9);transform-origin:0 0'>L2</div>
<div class='a' style='left:21px;top:89px;width:2.6px;height:7px;background:#c5c5c5'></div>
<div class='t' style='left:24.5px;top:88.5px;font-size:8px;font-weight:bold;color:#555;transform:scaleX(0.9);transform-origin:0 0'>L1</div>
<div class='t' style='left:223px;top:87.5px;font-size:9.5px;font-style:italic;color:#888'>(<span style='color:#a02020'>5</span>)</div>
</div>
<div class='a' style='left:844px;top:528px;width:242.5px;height:105.5px;background:#fdfdfd;border:1px solid #d2d2d2;overflow:hidden'>
<div class='t mono' style='left:12.899999999999977px;top:7px;font-size:8.9px;color:#7a7a7a'>List</div>
<div class='a' style='left:12.099999999999977px;top:16.5px;width:1px;height:58.0px;background:#b9b9b9'></div>
<div class='a' style='left:10.599999999999977px;top:72.0px;width:4px;height:4px;border-radius:2px;background:#b9b9b9'></div>
<div class='a' style='left:26.399999999999977px;top:18.5px;width:15.5px;height:8.5px;background:#d9d9d9'></div>
<div class='t mono' style='left:32.39999999999998px;top:19.0px;font-size:8.9px;font-style:italic;color:#8a8a8a'>0</div>
<div class='t mono' style='left:45.89999999999998px;top:18.8px;font-size:8.9px;color:#757575'>Point(X = 0.000, Y = -50.000, Z = 0.000)</div>
<div class='a' style='left:26.399999999999977px;top:30.700000000000003px;width:15.5px;height:8.5px;background:#d9d9d9'></div>
<div class='t mono' style='left:32.39999999999998px;top:31.200000000000003px;font-size:8.9px;font-style:italic;color:#8a8a8a'>1</div>
<div class='t mono' style='left:45.89999999999998px;top:31.000000000000004px;font-size:8.9px;color:#757575'>Point(X = 0.000, Y = -25.000, Z = 0.000)</div>
<div class='a' style='left:26.399999999999977px;top:42.9px;width:15.5px;height:8.5px;background:#d9d9d9'></div>
<div class='t mono' style='left:32.39999999999998px;top:43.4px;font-size:8.9px;font-style:italic;color:#8a8a8a'>2</div>
<div class='t mono' style='left:45.89999999999998px;top:43.199999999999996px;font-size:8.9px;color:#757575'>Point(X = 0.000, Y = 0.000, Z = 20.000)</div>
<div class='a' style='left:26.399999999999977px;top:55.099999999999994px;width:15.5px;height:8.5px;background:#d9d9d9'></div>
<div class='t mono' style='left:32.39999999999998px;top:55.599999999999994px;font-size:8.9px;font-style:italic;color:#8a8a8a'>3</div>
<div class='t mono' style='left:45.89999999999998px;top:55.39999999999999px;font-size:8.9px;color:#757575'>Point(X = 0.000, Y = 25.000, Z = 0.000)</div>
<div class='a' style='left:26.399999999999977px;top:67.3px;width:15.5px;height:8.5px;background:#d9d9d9'></div>
<div class='t mono' style='left:32.39999999999998px;top:67.8px;font-size:8.9px;font-style:italic;color:#8a8a8a'>4</div>
<div class='t mono' style='left:45.89999999999998px;top:67.6px;font-size:8.9px;color:#757575'>Point(X = 0.000, Y = 50.000, Z = 0.000)</div>
<div class='a' style='left:0;top:82px;width:242.5px;height:1px;background:#dedede'></div>
<div class='a' style='left:7px;top:89px;width:2.6px;height:7px;background:#c5c5c5'></div>
<div class='t' style='left:10.5px;top:88.5px;font-size:8px;font-weight:bold;color:#555;transform:scaleX(0.9);transform-origin:0 0'>L2</div>
<div class='a' style='left:21px;top:89px;width:2.6px;height:7px;background:#c5c5c5'></div>
<div class='t' style='left:24.5px;top:88.5px;font-size:8px;font-weight:bold;color:#555;transform:scaleX(0.9);transform-origin:0 0'>L1</div>
<div class='t' style='left:223px;top:87.5px;font-size:9.5px;font-style:italic;color:#888'>(<span style='color:#a02020'>5</span>)</div>
</div>
<svg class='a' style='left:0;top:0' width='1200' height='726'>
<path d='M409 421.9H451' stroke='#0e86a9' stroke-width='2.4'/><circle cx='451.5' cy='421.9' r='4' fill='#0e86a9'/>
<path d='M924.9 392.5V419' stroke='#0e86a9' stroke-width='2.4'/>
<path d='M824 585.3H857' stroke='#0e86a9' stroke-width='2.4'/><circle cx='857.5' cy='585.3' r='4' fill='#0e86a9'/>
</svg>
<svg class='a' style='left:0;top:0' width='1200' height='726'><g fill='none' stroke='#0e86a9' stroke-width='1.35' stroke-linecap='butt'>
<path d='M395.3 417.6L400.2 413.6V428.3M396 428.3H404.2'/>
<path d='M920.5 373.8C921.3 371.3 923.1 370.2 925 370.2C927.5 370.2 929 371.9 929 374.2C929 376.4 927.6 378 925.7 379.8L920.6 384.6H929.9'/>
<path d='M806.9 581.2C807.8 579.8 809.3 579 811 579C813.3 579 814.9 580.4 814.9 582.5C814.9 584.6 813.1 585.9 810.4 585.9C813.6 585.9 815.7 587.4 815.7 589.9C815.7 592.3 813.7 593.8 811 593.8C808.9 593.8 807.3 592.9 806.3 591.4'/>
</g></svg>
</body></html>
